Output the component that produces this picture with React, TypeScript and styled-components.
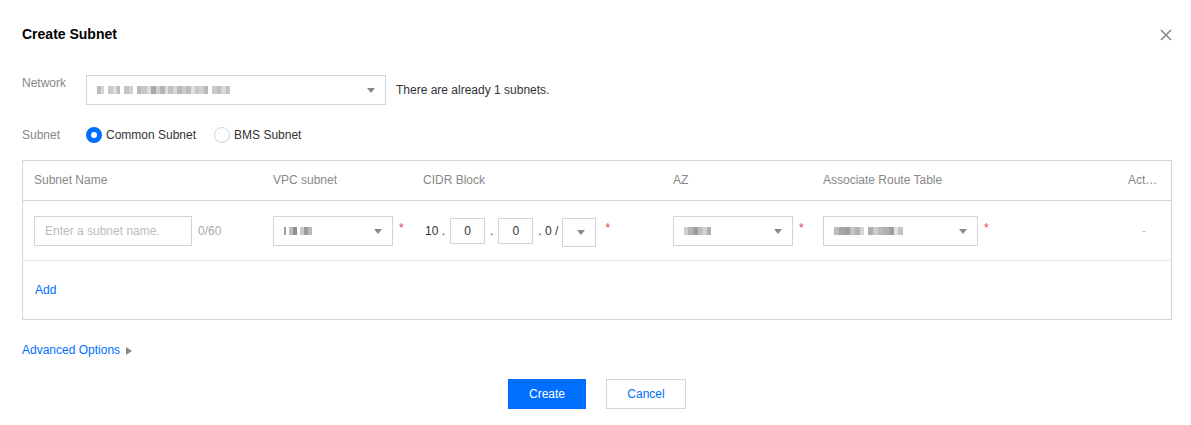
import styled, { createGlobalStyle } from "styled-components";

type Block = [number, string];

const GlobalStyle = createGlobalStyle`
  body {
    margin: 0;
    background: #fff;
    font-family: "Liberation Sans", Arial, sans-serif;
    font-size: 12px;
    color: #333;
  }
`;

// masked values shown as grey mosaic cells
const networkMask: Block[] = [
  [4, "#bdbdbd"], [3, "#d6d6d6"], [4, ""], [5, "#c9c9c9"], [4, "#dedede"], [3, "#bcbcbc"],
  [4, ""], [5, "#c4c4c4"], [4, "#d2d2d2"], [4, ""], [4, "#b8b8b8"], [6, "#c8c8c8"],
  [4, "#dcdcdc"], [5, "#a9a9a9"], [4, "#cfcfcf"], [5, "#b5b5b5"], [3, "#e0e0e0"],
  [5, "#c2c2c2"], [4, "#d8d8d8"], [5, "#b9b9b9"], [4, "#cdcdcd"], [5, "#bdbdbd"],
  [4, "#e1e1e1"], [4, "#c6c6c6"], [5, "#d0d0d0"], [4, "#b7b7b7"], [4, ""], [5, "#cacaca"],
  [4, "#bfbfbf"], [5, "#d9d9d9"], [4, "#c3c3c3"],
];
const vpcMask: Block[] = [
  [2, "#9d9d9d"], [3, ""], [4, "#bdbdbd"], [4, "#8f8f8f"], [3, ""], [4, "#c8c8c8"],
  [4, "#9a9a9a"], [4, "#bababa"],
];
const azMask: Block[] = [
  [4, "#cfcfcf"], [5, "#b4b4b4"], [5, "#9d9d9d"], [4, "#bcbcbc"], [5, "#d0d0d0"], [4, "#b0b0b0"],
];
const routeMask: Block[] = [
  [5, "#bdbdbd"], [6, "#a6a6a6"], [5, "#9e9e9e"], [5, "#c4c4c4"], [5, "#b3b3b3"],
  [4, "#d6d6d6"], [4, ""], [5, "#adadad"], [5, "#cccccc"], [5, "#bcbcbc"], [6, "#b0b0b0"],
  [5, "#9f9f9f"], [4, "#e2e2e2"], [5, "#c2c2c2"],
];

export default function App() {
  return <Dialog>
    <GlobalStyle/>
    <Header>
      <Title>Create Subnet</Title>
      <Close aria-label="close">
        <svg width="12" height="12" viewBox="0 0 12 12">
          <path d="M1 1L11 11M11 1L1 11" stroke="#888" strokeWidth="1.6" fill="none"/>
        </svg>
      </Close>
    </Header>

    <Form>
      <FormRow>
        <Label>Network</Label>
        <Select $width={300} $height={30}>
          <Mosaic blocks={networkMask}/>
          <Caret/>
        </Select>
        <Hint>There are already 1 subnets.</Hint>
      </FormRow>
      <FormRow $center $gap={22}>
        <Label>Subnet</Label>
        <Radio $checked/>
        <RadioText>Common Subnet</RadioText>
        <Radio/>
        <RadioText>BMS Subnet</RadioText>
      </FormRow>
    </Form>

    <Table>
      <HeadRow>
        <HeadCell>Subnet Name</HeadCell>
        <HeadCell>VPC subnet</HeadCell>
        <HeadCell>CIDR Block</HeadCell>
        <HeadCell>AZ</HeadCell>
        <HeadCell>Associate Route Table</HeadCell>
        <HeadCell>Action</HeadCell>
      </HeadRow>
      <BodyRow>
        <Cell>
          <TextInput placeholder="Enter a subnet name."/>
          <Counter>0/60</Counter>
        </Cell>
        <Cell>
          <Select $width={120} $height={30}>
            <Mosaic blocks={vpcMask}/>
            <Caret/>
          </Select>
          <Required>*</Required>
        </Cell>
        <Cell>
          <Cidr>
            <span>10 .</span>
            <Octet>0</Octet>
            <span>.</span>
            <Octet>0</Octet>
            <span>. 0 /</span>
            <Select $width={34} $height={29} $drop={3}>
              <Caret/>
            </Select>
          </Cidr>
          <Required $gap={9}>*</Required>
        </Cell>
        <Cell>
          <Select $width={120} $height={30}>
            <Mosaic blocks={azMask}/>
            <Caret/>
          </Select>
          <Required>*</Required>
        </Cell>
        <Cell>
          <Select $width={155} $height={30}>
            <Mosaic blocks={routeMask}/>
            <Caret/>
          </Select>
          <Required>*</Required>
        </Cell>
        <Cell $centered>
          <Dash>-</Dash>
        </Cell>
      </BodyRow>
      <AddRow>
        <Link>Add</Link>
      </AddRow>
    </Table>

    <Advanced>
      <Link>Advanced Options</Link>
      <svg width="6" height="8" viewBox="0 0 6 8">
        <path d="M0 0L6 4L0 8Z" fill="#888"/>
      </svg>
    </Advanced>

    <Footer>
      <PrimaryButton>Create</PrimaryButton>
      <Button>Cancel</Button>
    </Footer>
  </Dialog>
}

function Mosaic(props: { blocks: Block[] }) {
  return <MaskRow>
    {props.blocks.map(([w, c], i) => <MaskCell key={i} $w={w} $c={c}/>)}
  </MaskRow>
}

const Dialog = styled.div`
  width: 1191px;
  height: 425px;
  padding: 24px 19px 0 22px;
  box-sizing: border-box;
`;

const Header = styled.div`
  display: flex;
  justify-content: space-between;
  align-items: center;
  height: 20px;
`;

const Title = styled.h2`
  margin: 0;
  font-size: 14px;
  font-weight: 700;
  color: #000;
`;

const Close = styled.div`
  display: flex;
  width: 12px;
  height: 12px;
  margin-top: 2px;
`;

const Form = styled.div`
  display: flex;
  flex-direction: column;
  margin-top: 31px;
`;

const FormRow = styled.div<{ $center?: boolean; $gap?: number }>`
  display: flex;
  align-items: ${p => p.$center ? "center" : "flex-start"};
  margin-top: ${p => p.$gap ?? 0}px;
`;

const Label = styled.div`
  width: 64px;
  flex-shrink: 0;
  line-height: 16px;
  color: #888;
`;

const Select = styled.div<{ $width: number; $height: number; $drop?: number }>`
  position: relative;
  display: flex;
  flex-shrink: 0;
  align-items: center;
  width: ${p => p.$width}px;
  height: ${p => p.$height}px;
  margin-top: ${p => p.$drop ?? 0}px;
  padding: 0 10px;
  box-sizing: border-box;
  border: 1px solid #cfd5de;
  background: #fff;
`;

const Caret = styled.span`
  position: absolute;
  right: 10px;
  top: 50%;
  margin-top: -2px;
  width: 0;
  height: 0;
  border-left: 4px solid transparent;
  border-right: 4px solid transparent;
  border-top: 5px solid #888;
`;

const MaskRow = styled.div`
  display: flex;
  height: 8px;
`;

const MaskCell = styled.span<{ $w: number; $c: string }>`
  width: ${p => p.$w}px;
  height: 100%;
  background: ${p => p.$c || "transparent"};
`;

const Hint = styled.span`
  margin-left: 10px;
  line-height: 30px;
  color: #333;
`;

const Radio = styled.span<{ $checked?: boolean }>`
  width: 16px;
  height: 16px;
  flex-shrink: 0;
  box-sizing: border-box;
  border-radius: 50%;
  border: ${p => p.$checked ? "5px solid #006eff" : "1px solid #cfd5de"};
  background: #fff;
`;

const RadioText = styled.span`
  margin: 0 18px 0 4px;
  line-height: 16px;
  color: #333;
`;

const Table = styled.div`
  margin-top: 17px;
  width: 1150px;
  border: 1px solid #cfd5de;
  box-sizing: border-box;
`;

const columns = "239px 150px 250px 150px 305px 54px";

const HeadRow = styled.div`
  display: grid;
  grid-template-columns: ${columns};
  height: 40px;
  border-bottom: 1px solid #cfd5de;
  box-sizing: border-box;
`;

const HeadCell = styled.div`
  padding: 0 13px 0 11px;
  line-height: 39px;
  color: #888;
  white-space: nowrap;
  overflow: hidden;
  text-overflow: ellipsis;
`;

const BodyRow = styled.div`
  display: grid;
  grid-template-columns: ${columns};
  height: 60px;
  border-bottom: 1px solid #e7eaef;
  box-sizing: border-box;
`;

const Cell = styled.div<{ $centered?: boolean }>`
  display: flex;
  align-items: center;
  justify-content: ${p => p.$centered ? "center" : "flex-start"};
  padding: 0 11px;
`;

const TextInput = styled.input`
  width: 158px;
  height: 30px;
  flex-shrink: 0;
  padding: 0 10px;
  box-sizing: border-box;
  border: 1px solid #cfd5de;
  outline: none;
  font: inherit;
  color: #333;

  &::placeholder {
    color: #bbb;
  }
`;

const Counter = styled.span`
  margin-left: 6px;
  color: #aaa;
`;

const Required = styled.span<{ $gap?: number }>`
  align-self: center;
  margin: -6px 0 0 ${p => p.$gap ?? 6}px;
  color: #e54545;
  font-size: 12px;
`;

const Cidr = styled.div`
  display: flex;
  align-items: center;
  gap: 4px;
  margin-left: 2px;
  color: #333;
`;

const Octet = styled.span`
  width: 35px;
  height: 26px;
  margin: 0 1px;
  box-sizing: border-box;
  border: 1px solid #cfd5de;
  display: flex;
  align-items: center;
  justify-content: center;
`;

const Dash = styled.span`
  color: #bbb;
`;

const AddRow = styled.div`
  display: flex;
  align-items: center;
  height: 58px;
  padding: 0 12px;
`;

const Link = styled.span`
  color: #006eff;
  cursor: pointer;
`;

const Advanced = styled.div`
  display: flex;
  align-items: center;
  gap: 6px;
  height: 18px;
  margin-top: 21px;

  svg {
    margin-top: 2px;
  }
`;

const Footer = styled.div`
  display: flex;
  justify-content: center;
  gap: 20px;
  margin-top: 20px;
`;

const Button = styled.button`
  width: 80px;
  height: 30px;
  border: 1px solid #cfd5de;
  background: #fff;
  color: #006eff;
  font: inherit;
  cursor: pointer;
`;

const PrimaryButton = styled(Button)`
  width: 78px;
  border-color: #006eff;
  background: #006eff;
  color: #fff;
`;
